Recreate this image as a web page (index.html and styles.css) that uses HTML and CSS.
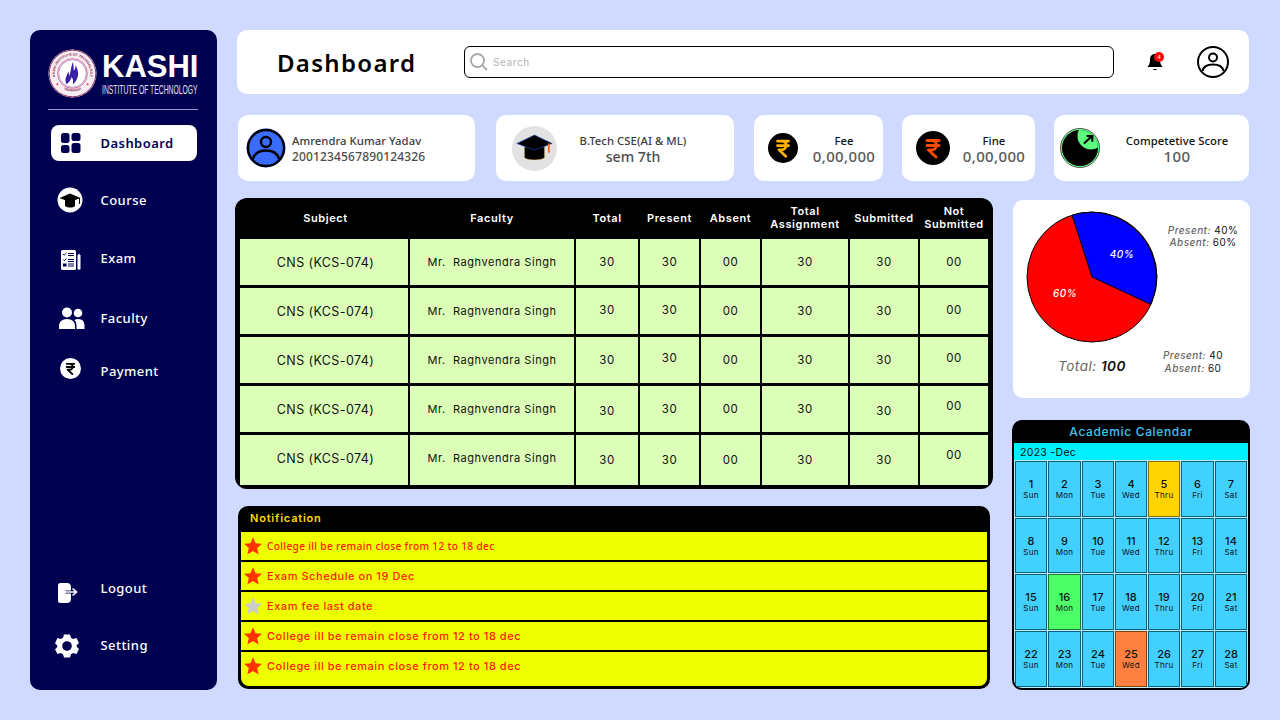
FILE: index.html
```html
<!DOCTYPE html>
<html lang="en">
<head>
<meta charset="utf-8">
<title>Dashboard</title>
<link rel="stylesheet" href="styles.css">
</head>
<body>
<svg class="defs" width="0" height="0" aria-hidden="true">
  <defs>
    <symbol id="rupee" viewBox="0 0 24 24">
      <path d="M6 4.500h12M6 9.500h12M8 4.500h2.500c3.200 0 5 2 5 4.500s-2 5-5 5H7.500L15 21" fill="none" stroke="currentColor" stroke-width="3" stroke-linecap="round" stroke-linejoin="round"/>
    </symbol>
    <symbol id="star" viewBox="0 0 24 24">
      <path d="M12 1.500l3.100 7.200 7.800.7-5.900 5.100 1.800 7.700L12 18.100l-6.800 4.100 1.800-7.700L1.100 9.400l7.800-.7z"/>
    </symbol>
    <clipPath id="gauge-clip"><circle cx="20" cy="20" r="18"/></clipPath>
    <path id="seal-top" d="M7.500 29A18 18 0 1 1 42.500 29"/>
    <path id="seal-bottom" d="M11 37A18.500 18.500 0 0 0 39 37"/>
  </defs>
</svg>
<div class="app">
  <aside class="sidebar">
    <div class="brand">
      <svg class="seal" viewBox="0 0 50 50" role="img" aria-label="Kashi Institute of Technology seal">
        <circle cx="25" cy="25" r="24.500" fill="#f6eef2"/>
        <circle cx="25" cy="25" r="23.800" fill="none" stroke="#8a2a5c" stroke-width="1"/>
        <text class="seal-text"><textPath href="#seal-top" startOffset="50%" text-anchor="middle">KASHI INSTITUTE OF TECHNOLOGY</textPath></text>
        <text class="seal-text"><textPath href="#seal-bottom" startOffset="50%" text-anchor="middle">VARANASI</textPath></text>
        <circle cx="9.500" cy="36" r="1" fill="#e8324a"/>
        <circle cx="40.500" cy="36" r="1" fill="#e8324a"/>
        <circle cx="25" cy="25" r="15.200" fill="#fff" stroke="#d8506a" stroke-width=".8"/>
        <circle cx="25" cy="25" r="14" fill="none" stroke="#7a62d0" stroke-width=".6"/>
        <path d="M19 36c-3-6 .5-8 1.500-13 1 2 1.200 3 .8 5 2-3 1.700-9 4.200-15 .3 4 1 6 .7 9 1.500-1 2-3 2-5.500 2.500 5 3.500 9 1.500 13.500-1 2.500-2.500 4.500-4.500 6 1-3 .2-5.500-1-7.500-1 3-2.700 5.500-5.200 7.500z" fill="#3a1ea8"/>
      </svg>
      <div class="brand-text">
        <div class="brand-name">KASHI</div>
        <div class="brand-sub">INSTITUTE OF TECHNOLOGY</div>
      </div>
    </div>
    <nav class="nav">
      <a class="nav-item active">
        <svg class="nav-icon" viewBox="0 0 20 20"><rect x="0" y="0" width="8.500" height="10" rx="2.500" fill="#000050"/><rect x="10.500" y="0" width="9" height="8" rx="2.500" fill="#000050"/><rect x="0" y="12" width="8.500" height="8" rx="2.500" fill="#000050"/><rect x="10.500" y="10" width="9" height="10" rx="2.500" fill="#000050"/></svg>
        <span>Dashboard</span>
      </a>
      <a class="nav-item gap-a">
        <span class="icon-slot"><svg class="icon-course" viewBox="0 0 26 26"><circle cx="13" cy="13" r="12.500" fill="#fff"/><path d="M8 13v6c3 2 8 2 10 0v-6z" fill="#000"/><path d="M2.500 11L13 6.500 23.500 11 13 15z" fill="#000"/><path d="M22.500 11v6" stroke="#000" stroke-width="1"/></svg></span>
        <span>Course</span>
      </a>
      <a class="nav-item gap-b">
        <span class="icon-slot"><svg class="icon-exam" viewBox="0 0 20 20"><rect x="0" y="0" width="15" height="20" rx="1.500" fill="#fff"/><path d="M2 4l1.200 1.200L5.500 3M2 9.500l1.200 1.200 2.300-2.200" stroke="#000050" fill="none" stroke-width="1"/><path d="M7 3.500h6M7 5.500h6M7 9.500h6M7 11.500h6" stroke="#000050" stroke-width="1"/><rect x="2" y="13.500" width="3.500" height="3" fill="#000050"/><path d="M7 14h6M7 16h6" stroke="#000050" stroke-width="1"/><path d="M16.500 5.500l1.500-2 1.500 2V19l-1.500 1-1.500-1z" fill="#fff"/></svg></span>
        <span>Exam</span>
      </a>
      <a class="nav-item gap-c">
        <span class="icon-slot"><svg class="icon-faculty" viewBox="0 0 26 22"><circle cx="8" cy="5.500" r="5" fill="#fff"/><circle cx="19" cy="6" r="4.300" fill="#fff"/><path d="M0 22v-3c0-4 3-7 8-7s8 3 8 7v3z" fill="#fff"/><path d="M17.500 22v-3.500c0-2.500-.8-4.300-2.200-5.600 1-.6 2.300-.9 3.700-.9 4.500 0 6.500 2.800 6.500 6.500V22z" fill="#fff"/></svg></span>
        <span>Faculty</span>
      </a>
      <a class="nav-item gap-d">
        <span class="icon-slot"><span class="coin coin-nav"><svg class="coin-glyph"><use href="#rupee"/></svg></span></span>
        <span>Payment</span>
      </a>
      <a class="nav-item push">
        <span class="icon-slot"><svg class="icon-logout" viewBox="0 0 20 20"><path d="M2.500 0H9c2.500 0 4 1.500 4 4v3.500H7.500v3H13V16c0 2.500-1.500 4-4 4H2.500A2.500 2.500 0 0 1 0 17.500v-15A2.500 2.500 0 0 1 2.500 0z" fill="#fff"/><path d="M6 9h12M14.500 5.500l4 3.500-4 3.500" stroke="#fff" fill="none" stroke-width="1.600"/></svg></span>
        <span>Logout</span>
      </a>
      <a class="nav-item gap-a">
        <span class="icon-slot"><svg class="icon-gear" viewBox="0 0 24 24"><path fill="#fff" fill-rule="evenodd" d="M9 .5h6l1 3.200 2.200 1.200 3.300-.8 2.500 4.900-2.300 2.300v1.400l2.300 2.300-2.500 4.900-3.300-.8-2.200 1.200-1 3.200H9l-1-3.200-2.200-1.200-3.300.8L0 15.300l2.300-2.300v-1.400L0 9.300 2.500 4.100l3.300.8L8 3.700zM12 7.200a4.800 4.800 0 1 0 0 9.600 4.800 4.800 0 0 0 0-9.600z"/></svg></span>
        <span>Setting</span>
      </a>
    </nav>
  </aside>

  <main class="content">
    <header class="topbar">
      <h1 class="title">Dashboard</h1>
      <label class="search">
        <svg class="search-icon" viewBox="0 0 18 18"><circle cx="7.500" cy="7.500" r="6.500" fill="none" stroke="#a8a8a8" stroke-width="1.800"/><path d="M12.300 12.300L17 17" stroke="#a8a8a8" stroke-width="1.800"/></svg>
        <span class="search-text">Search</span>
      </label>
      <div class="bell">
        <svg class="bell-icon" viewBox="0 0 16 18"><path d="M8 1C4.500 1 3 3.500 3 7c0 3-1 5-2.500 7h15C14 12 13 10 13 7c0-3.500-1.500-6-5-6z" fill="#000"/><path d="M5.500 16c1.500 1.500 3.500 1.500 5 0z" fill="#000"/></svg>
        <span class="badge">4</span>
      </div>
      <svg class="top-user" viewBox="0 0 32 32"><circle cx="16" cy="16" r="15" fill="none" stroke="#000" stroke-width="2"/><circle cx="16" cy="11.500" r="4" fill="none" stroke="#000" stroke-width="2"/><path d="M5.500 25c1-5 5-6.500 10.500-6.500S25.500 20 26.500 25" fill="none" stroke="#000" stroke-width="2"/></svg>
    </header>

    <section class="stats">
      <div class="card card-name">
        <svg class="avatar" viewBox="0 0 40 40"><circle cx="20" cy="20" r="19.500" fill="#3a6cff"/><circle cx="20" cy="20" r="18" fill="none" stroke="#000" stroke-width="2.400"/><circle cx="20" cy="14" r="5" fill="none" stroke="#000" stroke-width="2.400"/><path d="M7 31c1.500-6 7-8.500 13-8.500S31.500 25 33 31" fill="none" stroke="#000" stroke-width="2.400"/></svg>
        <div class="name-text">
          <div class="label">Amrendra Kumar Yadav</div>
          <div class="value-id">2001234567890124326</div>
        </div>
      </div>
      <div class="card card-course">
        <span class="cap-circle">
          <svg class="cap" viewBox="0 0 44 34"><path d="M10 15v13c4 3.500 20 3.500 24 0V15z" fill="#000" stroke="#e8c860" stroke-width=".6"/><path d="M1 11L22 1l21 10-21 8z" fill="#000" stroke="#2050d0" stroke-width=".7"/><rect x="38" y="11" width="2.200" height="11" fill="#ff6a1a"/></svg>
        </span>
        <div class="stack stack-course">
          <div class="label">B.Tech CSE(AI &amp; ML)</div>
          <div class="value-sem">sem 7th</div>
        </div>
      </div>
      <div class="card card-fee">
        <span class="coin coin-fee"><svg class="coin-glyph"><use href="#rupee"/></svg></span>
        <div class="stack stack-fee">
          <div class="label dark">Fee</div>
          <div class="amount">0,00,000</div>
        </div>
      </div>
      <div class="card card-fine">
        <span class="coin coin-fine"><svg class="coin-glyph"><use href="#rupee"/></svg></span>
        <div class="stack stack-fine">
          <div class="label dark">Fine</div>
          <div class="amount">0,00,000</div>
        </div>
      </div>
      <div class="card card-score">
        <svg class="gauge" viewBox="0 0 40 40"><circle cx="20" cy="20" r="19.500" fill="#5dff7e" stroke="#555" stroke-width="1"/><circle cx="20" cy="20" r="18" fill="#000"/><circle cx="31" cy="8" r="13.500" fill="#5dff7e" clip-path="url(#gauge-clip)"/><path d="M24 15.500L32 8M26.500 8h5.800v5.800" fill="none" stroke="#000" stroke-width="2.200"/></svg>
        <div class="stack stack-score">
          <div class="label dark">Competetive Score</div>
          <div class="amount">100</div>
        </div>
      </div>
    </section>

    <section class="middle">
      <div class="left-col">
        <div class="table">
          <div class="th subject">Subject</div><div class="th">Faculty</div><div class="th">Total</div><div class="th">Present</div><div class="th">Absent</div><div class="th">Total Assignment</div><div class="th">Submitted</div><div class="th">Not Submitted</div>

          <div class="td subject">CNS (KCS-074)</div><div class="td faculty">Mr.&nbsp; Raghvendra Singh</div><div class="td">30</div><div class="td">30</div><div class="td">00</div><div class="td">30</div><div class="td">30</div><div class="td">00</div>

          <div class="td subject">CNS (KCS-074)</div><div class="td faculty">Mr.&nbsp; Raghvendra Singh</div><div class="td up1">30</div><div class="td up1">30</div><div class="td">00</div><div class="td">30</div><div class="td">30</div><div class="td up1">00</div>

          <div class="td subject">CNS (KCS-074)</div><div class="td faculty">Mr.&nbsp; Raghvendra Singh</div><div class="td">30</div><div class="td up2">30</div><div class="td">00</div><div class="td">30</div><div class="td">30</div><div class="td up2">00</div>

          <div class="td subject">CNS (KCS-074)</div><div class="td faculty">Mr.&nbsp; Raghvendra Singh</div><div class="td dn2">30</div><div class="td">30</div><div class="td">00</div><div class="td">30</div><div class="td dn2">30</div><div class="td up3">00</div>

          <div class="td subject up2">CNS (KCS-074)</div><div class="td faculty up2">Mr.&nbsp; Raghvendra Singh</div><div class="td">30</div><div class="td">30</div><div class="td">00</div><div class="td">30</div><div class="td">30</div><div class="td up4">00</div>
        </div>

        <div class="notice">
          <div class="notice-head">Notification</div>
          <div class="notice-row"><svg class="star"><use href="#star"/></svg><span class="small">College ill be remain close from 12 to 18 dec</span></div>
          <div class="notice-row"><svg class="star"><use href="#star"/></svg><span>Exam Schedule on 19 Dec</span></div>
          <div class="notice-row"><svg class="star grey"><use href="#star"/></svg><span>Exam fee last date</span></div>
          <div class="notice-row"><svg class="star"><use href="#star"/></svg><span>College ill be remain close from 12 to 18 dec</span></div>
          <div class="notice-row last"><svg class="star"><use href="#star"/></svg><span>College ill be remain close from 12 to 18 dec</span></div>
        </div>
      </div>

      <div class="right-col">
        <div class="pie-card">
          <div class="pie-top">
            <svg class="pie" viewBox="0 0 132 132">
              <circle cx="66" cy="66" r="65" fill="#ff0000" stroke="#000" stroke-width="1"/>
              <path d="M66 66L46 4.200A65 65 0 0 1 124.500 93.300z" fill="#0000ff" stroke="#000" stroke-width="1"/>
              <text class="pie-label" x="96" y="47" text-anchor="middle">40%</text>
              <text class="pie-label" x="39" y="86" text-anchor="middle">60%</text>
            </svg>
            <div class="legend legend-pct">
              <div><em>Present:</em> 40%</div>
              <div><em>Absent:</em> 60%</div>
            </div>
          </div>
          <div class="pie-bottom">
            <div class="total"><em>Total:</em> <b>100</b></div>
            <div class="legend legend-count">
              <div><em>Present:</em> 40</div>
              <div><em>Absent:</em> 60</div>
            </div>
          </div>
        </div>

        <div class="calendar">
          <div class="cal-head">Academic Calendar</div>
          <div class="cal-month">2023 -Dec</div>
          <div class="cal-grid">
            <div class="day"><b>1</b><span>Sun</span></div><div class="day"><b>2</b><span>Mon</span></div><div class="day"><b>3</b><span>Tue</span></div><div class="day"><b>4</b><span>Wed</span></div><div class="day gold"><b>5</b><span>Thru</span></div><div class="day"><b>6</b><span>Fri</span></div><div class="day"><b>7</b><span>Sat</span></div>
            <div class="day"><b>8</b><span>Sun</span></div><div class="day"><b>9</b><span>Mon</span></div><div class="day"><b>10</b><span>Tue</span></div><div class="day"><b>11</b><span>Wed</span></div><div class="day"><b>12</b><span>Thru</span></div><div class="day"><b>13</b><span>Fri</span></div><div class="day"><b>14</b><span>Sat</span></div>
            <div class="day"><b>15</b><span>Sun</span></div><div class="day green"><b>16</b><span>Mon</span></div><div class="day"><b>17</b><span>Tue</span></div><div class="day"><b>18</b><span>Wed</span></div><div class="day"><b>19</b><span>Thru</span></div><div class="day"><b>20</b><span>Fri</span></div><div class="day"><b>21</b><span>Sat</span></div>
            <div class="day"><b>22</b><span>Sun</span></div><div class="day"><b>23</b><span>Mon</span></div><div class="day"><b>24</b><span>Tue</span></div><div class="day orange"><b>25</b><span>Wed</span></div><div class="day"><b>26</b><span>Thru</span></div><div class="day"><b>27</b><span>Fri</span></div><div class="day"><b>28</b><span>Sat</span></div>
          </div>
        </div>
      </div>
    </section>
  </main>
</div>
</body>
</html>
```

FILE: styles.css
```css
* { box-sizing: border-box; margin: 0; padding: 0; }
html, body { height: 100%; }
body {
  background: #d0d9ff;
  font-family: "Noto Sans", sans-serif;
  overflow: hidden;
}
.defs { display: block; height: 0; }
.app {
  width: 1280px;
  height: 720px;
  padding: 30px;
  display: flex;
  gap: 20px;
}

/* Sidebar */
.sidebar {
  width: 187px;
  height: 660px;
  flex: none;
  background: #000050;
  border-radius: 10px;
  display: flex;
  flex-direction: column;
  align-items: center;
  padding-top: 19px;
  padding-bottom: 27px;
}
.brand {
  width: 150px;
  height: 61px;
  align-self: flex-start;
  margin-left: 18px;
  display: flex;
  gap: 5px;
  border-bottom: 1px solid #9a9ad2;
  flex: none;
}
.seal { width: 49px; height: 49px; flex: none; }
.seal-text {
  font-family: "Liberation Sans", sans-serif;
  font-size: 3.600px;
  font-weight: 700;
  fill: #8a2a5c;
}
.brand-text { color: #fff; min-width: 0; }
.brand-name {
  font-family: "Liberation Sans", sans-serif;
  font-weight: 700;
  font-size: 31px;
  line-height: 36px;
  width: 96px;
}
.brand-sub {
  font-family: "Liberation Sans", sans-serif;
  font-size: 12px;
  line-height: 10px;
  white-space: nowrap;
  color: #e4e4f0;
  transform: scaleX(.565);
  transform-origin: left center;
}
.nav {
  flex: 1;
  width: 146px;
  margin-top: 15px;
  display: flex;
  flex-direction: column;
}
.nav-item {
  height: 36px;
  flex: none;
  display: flex;
  align-items: center;
  color: #fff;
  font-size: 13px;
  font-weight: 500;
  letter-spacing: .45px;
  padding-left: 50px;
}
.nav-item.active {
  background: #fff;
  color: #000050;
  border-radius: 8px;
  padding-left: 10px;
  font-weight: 600;
}
.nav-icon { width: 20px; height: 20px; margin-right: 20px; flex: none; }
.icon-slot {
  width: 0;
  margin-left: -50px;
  margin-right: 50px;
  flex: none;
  display: flex;
  align-items: center;
}
.gap-a { margin-top: 21px; }
.gap-b { margin-top: 22px; }
.gap-c { margin-top: 24px; }
.gap-d { margin-top: 17px; }
.push { margin-top: auto; }
.icon-course { width: 26px; height: 26px; flex: none; margin-left: 6px; }
.icon-exam { width: 20px; height: 20px; flex: none; margin-left: 10px; margin-top: 3px; }
.icon-faculty { width: 26px; height: 22px; flex: none; margin-left: 8px; }
.icon-logout { width: 20px; height: 20px; flex: none; margin-left: 7px; margin-top: 9px; }
.icon-gear { width: 24px; height: 24px; flex: none; margin-left: 4px; margin-top: 2px; }
.coin {
  display: flex;
  align-items: center;
  justify-content: center;
  border-radius: 50%;
  flex: none;
  background: #000;
}
.coin-nav { width: 21px; height: 21px; background: #fff; color: #000; margin-left: 9px; margin-top: -5px; }
.coin-nav .coin-glyph { width: 15px; height: 15px; }
.coin-glyph { display: block; }

/* Content column */
.content {
  flex: 1;
  min-width: 0;
  display: flex;
  flex-direction: column;
}
.topbar {
  width: 1012px;
  height: 64px;
  background: #fff;
  border-radius: 10px;
  display: flex;
  align-items: center;
  padding-left: 40px;
  flex: none;
}
.title {
  width: 187px;
  flex: none;
  font-size: 24px;
  font-weight: 600;
  letter-spacing: 1.300px;
  color: #000;
}
.search {
  width: 650px;
  height: 32px;
  border: 1.500px solid #000;
  border-radius: 6px;
  display: flex;
  align-items: center;
  padding-left: 5px;
  gap: 5px;
  flex: none;
}
.search-icon { width: 18px; height: 18px; flex: none; }
.search-text { font-family: Inter, sans-serif; font-size: 10px; color: #b4b4b4; letter-spacing: .6px; }
.bell {
  width: 16px;
  height: 18px;
  margin-left: 33px;
  position: relative;
  flex: none;
}
.bell-icon { width: 16px; height: 18px; display: block; }
.badge {
  position: absolute;
  top: -1px;
  right: -1px;
  width: 10px;
  height: 10px;
  background: #f00;
  border-radius: 50%;
  color: #fff;
  font-size: 6px;
  line-height: 10px;
  text-align: center;
}
.top-user { width: 32px; height: 32px; margin-left: 34px; flex: none; }

/* Stat cards */
.stats {
  display: flex;
  height: 66px;
  margin-top: 21px;
  padding-left: 1px;
  flex: none;
}
.card {
  background: #fff;
  border-radius: 10px;
  height: 66px;
  display: flex;
  align-items: center;
  flex: none;
}
.card-name { width: 237px; padding-left: 8px; gap: 6px; margin-right: 21px; }
.card-course { width: 238px; padding-left: 16px; margin-right: 20px; }
.card-fee { width: 129px; padding-left: 14px; margin-right: 19px; }
.card-fine { width: 133px; padding-left: 14px; margin-right: 19px; }
.card-score { width: 195px; padding-left: 6px; }
.avatar { width: 40px; height: 40px; flex: none; }
.label {
  font-size: 11.300px;
  line-height: 16px;
  font-weight: 500;
  color: #3c3c3c;
  letter-spacing: .05px;
  white-space: nowrap;
}
.label.dark { color: #111; }
.value-id { font-size: 12px; line-height: 15px; color: #4c4c4c; font-weight: 500; letter-spacing: .15px; white-space: nowrap; }
.value-sem { font-size: 14.200px; line-height: 15px; color: #4c4c4c; font-weight: 500; }
.amount { font-size: 15px; line-height: 15px; color: #5a5a5a; font-weight: 500; letter-spacing: .35px; white-space: nowrap; }
.stack { text-align: center; display: flex; flex-direction: column; align-items: center; }
.cap-circle {
  width: 45px;
  height: 45px;
  border-radius: 50%;
  background: #e2e2e2;
  display: flex;
  align-items: center;
  justify-content: center;
  flex: none;
}
.cap { width: 37px; height: 29px; }
.stack-course { width: 152px; }
.coin-fee { width: 30px; height: 30px; color: #ffb300; }
.coin-fee .coin-glyph { width: 22px; height: 22px; }
.coin-fine { width: 34px; height: 34px; color: #ff4a00; }
.coin-fine .coin-glyph { width: 24px; height: 24px; }
.stack-fee { margin-left: 15px; width: 62px; }
.stack-fine { margin-left: 13px; width: 62px; }
.gauge { width: 40px; height: 40px; flex: none; }
.stack-score { margin-left: 16px; width: 122px; }

/* Middle */
.middle {
  display: flex;
  flex: 1;
  min-height: 0;
}
.left-col {
  width: 776px;
  flex: none;
  padding-top: 17px;
  margin-left: -2px;
}
.table {
  width: 758px;
  height: 291px;
  background: #000;
  border-radius: 12px;
  padding: 0 5px 4px;
  display: grid;
  grid-template-columns: 168px 164px 62px 59px 59px 86px 68px 68px;
  grid-template-rows: 38px 46px 46px 46px 46px 50px;
  column-gap: 2px;
  row-gap: 3px;
}
.th {
  color: #fff;
  font-family: Inter, sans-serif;
  font-size: 11px;
  line-height: 13px;
  font-weight: 600;
  letter-spacing: .6px;
  display: flex;
  align-items: center;
  justify-content: center;
  text-align: center;
  padding-top: 2px;
}
.td {
  background: #dcffb8;
  font-family: Inter, sans-serif;
  font-size: 11.500px;
  letter-spacing: .6px;
  color: #111;
  display: flex;
  align-items: center;
  justify-content: center;
  white-space: nowrap;
}
.td.subject { font-size: 12.500px; letter-spacing: .4px; }
.subject { padding-left: 3px; }
.td.faculty { font-size: 11px; letter-spacing: .55px; }
.up1 { padding-bottom: 2px; }
.up2 { padding-bottom: 4px; }
.up3 { padding-bottom: 6px; }
.up4 { padding-bottom: 10px; }
.dn2 { padding-top: 4px; }

/* Notifications */
.notice {
  width: 752px;
  height: 183px;
  margin-top: 17px;
  margin-left: 3px;
  background: #000;
  border-radius: 10px;
  padding: 0 3px 3px;
  display: flex;
  flex-direction: column;
  gap: 2px;
}
.notice-head {
  height: 26px;
  flex: none;
  margin-bottom: -2px;
  padding-bottom: 3px;
  font-family: Inter, sans-serif;
  font-size: 11px;
  font-weight: 600;
  letter-spacing: .8px;
  color: #ffd800;
  display: flex;
  align-items: center;
  padding-left: 9px;
}
.notice-row {
  height: 28px;
  flex: none;
  background: #eeff00;
  display: flex;
  align-items: center;
  gap: 4px;
  padding-left: 2px;
  font-family: Inter, sans-serif;
  font-size: 11px;
  font-weight: 500;
  letter-spacing: .55px;
  color: #ff1a00;
}
.notice-row.last { height: 34px; padding-bottom: 6px; border-radius: 0 0 8px 8px; }
.small { font-family: "Noto Sans", sans-serif; font-size: 10.200px; letter-spacing: .3px; }
.star { width: 20px; height: 20px; fill: #ff3300; flex: none; }
.star.grey { fill: #cccccc; }

/* Right column */
.right-col {
  flex: 1;
  padding-top: 19px;
  margin-left: 1px;
  min-width: 0;
}
.pie-card {
  width: 237px;
  height: 198px;
  margin-left: 1px;
  background: #fff;
  border-radius: 10px;
  padding: 11px 0 0 13px;
}
.pie-top { display: flex; gap: 10px; height: 138px; }
.pie { width: 132px; height: 132px; flex: none; }
.pie-label {
  font-family: Inter, sans-serif;
  font-size: 10px;
  font-style: italic;
  font-weight: 500;
  fill: #fff;
  letter-spacing: .5px;
}
.legend {
  font-family: Inter, sans-serif;
  font-size: 10px;
  line-height: 12px;
  letter-spacing: .45px;
  color: #111;
  text-align: center;
  white-space: nowrap;
}
.legend em { color: #666; font-weight: 500; }
.legend-pct { width: 74px; margin-top: 13px; margin-left: -2px; }
.pie-bottom { display: flex; align-items: flex-start; }
.total {
  width: 132px;
  text-align: center;
  font-family: Inter, sans-serif;
  font-size: 13.500px;
  font-style: italic;
  color: #666;
  letter-spacing: .5px;
  padding-top: 9px;
}
.total b { color: #111; font-weight: 600; }
.legend-count { width: 70px; line-height: 13px; }

/* Calendar */
.calendar {
  width: 238px;
  height: 270px;
  margin-top: 22px;
  background: #000;
  border-radius: 10px;
  padding: 0 2px 2px;
  display: flex;
  flex-direction: column;
}
.cal-head {
  height: 23px;
  flex: none;
  color: #3fc4f5;
  font-family: Inter, sans-serif;
  font-size: 12px;
  font-weight: 500;
  letter-spacing: .65px;
  display: flex;
  align-items: center;
  justify-content: center;
}
.cal-month {
  height: 17px;
  flex: none;
  background: #00f0ff;
  color: #111;
  font-family: Inter, sans-serif;
  font-size: 10.500px;
  letter-spacing: .3px;
  display: flex;
  align-items: center;
  padding-left: 6px;
  padding-top: 1px;
}
.cal-grid {
  flex: 1;
  background: #bdf0ff;
  padding: 1px;
  display: grid;
  grid-template-columns: 32px 33px 32px 32px 32px 33px 32px;
  grid-template-rows: 56px 55px 56px 56px;
  gap: 1px;
  border-radius: 0 0 8px 8px;
  overflow: hidden;
}
.day {
  background: #42d0ff;
  border: 1px solid #0e5f7d;
  display: flex;
  flex-direction: column;
  align-items: center;
  justify-content: center;
  font-family: Inter, sans-serif;
  color: #111;
}
.day b { font-size: 11px; line-height: 13px; font-weight: 500; }
.day span { font-size: 8px; line-height: 9px; letter-spacing: .3px; }
.day.gold { background: #ffd400; border-color: #8a6a00; }
.day.green { background: #4cff66; border-color: #187a30; }
.day.orange { background: #ff8040; border-color: #8a4000; }
```
